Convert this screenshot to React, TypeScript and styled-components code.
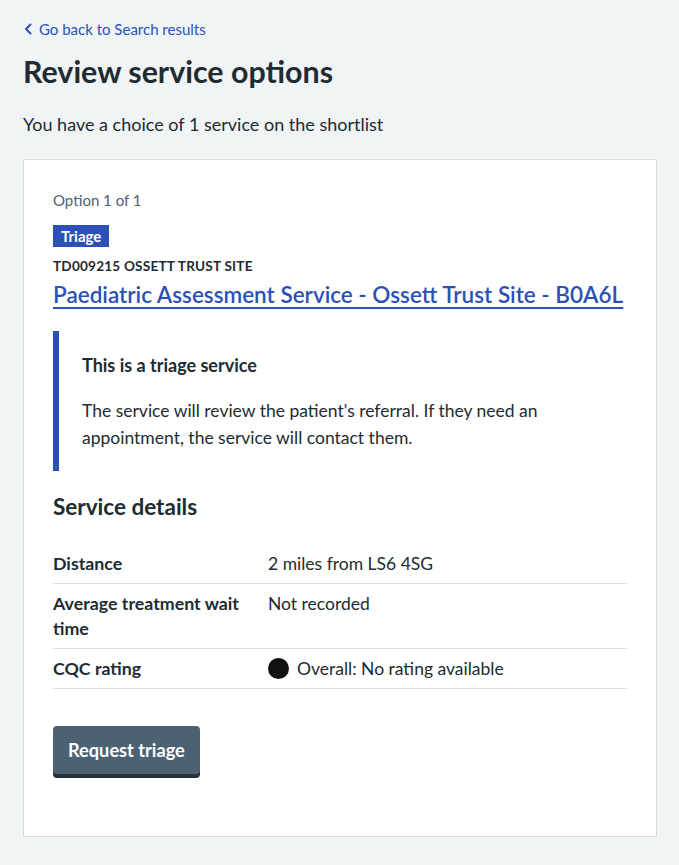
import React from "react";
import styled, { createGlobalStyle } from "styled-components";

const Global = createGlobalStyle`
  html, body { margin: 0; padding: 0; background: #f0f4f5; }
  body { font-family: Lato, "Noto Sans", sans-serif; color: #212b32; -webkit-font-smoothing: antialiased; }
  * { box-sizing: border-box; }
`;

const Page = styled.main`
  padding: 18px 22px 28px 23px;
  display: flex;
  flex-direction: column;
`;

const BackLink = styled.a`
  display: inline-flex;
  align-items: center;
  gap: 7px;
  color: #2c50b6;
  font-size: 15px;
  line-height: 22px;
  text-decoration: none;
  align-self: flex-start;
  padding-left: 1px;
`;

const Title = styled.h1`
  margin: 13px 0 0;
  font-size: 30.4px;
  line-height: 36px;
  font-weight: 700;
`;

const Lead = styled.p`
  margin: 23px 0 0;
  font-size: 18px;
  line-height: 24px;
`;

const Card = styled.section`
  margin-top: 23px;
  background: #fff;
  border: 1px solid #d8dde0;
  padding: 29px 29px 62px;
  display: flex;
  flex-direction: column;
`;

const Caption = styled.div`
  color: #4c6272;
  font-size: 15px;
  line-height: 22px;
`;

const Tag = styled.span`
  display: inline-block;
  align-self: flex-start;
  margin-top: 14px;
  background: #2c50b6;
  color: #fff;
  font-weight: 700;
  font-size: 15px;
  line-height: 22px;
  height: 22px;
  padding: 0 8px;
`;

const Code = styled.div`
  margin-top: 10px;
  font-size: 13.6px;
  font-weight: 700;
  line-height: 18px;
  letter-spacing: 0.2px;
`;

const ServiceLink = styled.a`
  margin-top: 5px;
  align-self: flex-start;
  color: #2c50b6;
  font-size: 22.5px;
  line-height: 30px;
  font-weight: 600;
  text-decoration: underline;
  text-underline-offset: 4px;
  text-decoration-thickness: 2px;
`;

const Inset = styled.div`
  margin-top: 21px;
  border-left: 6px solid #2c50b6;
  padding: 22px 0 20px 23px;
`;

const InsetTitle = styled.h3`
  margin: 0;
  font-size: 18px;
  line-height: 24px;
  font-weight: 700;
`;

const InsetText = styled.p`
  margin: 20px 0 0;
  font-size: 17.5px;
  line-height: 27px;
`;

const SectionTitle = styled.h2`
  margin: 20px 0 0;
  font-size: 22.5px;
  line-height: 32px;
  font-weight: 700;
`;

const SummaryList = styled.dl`
  margin: 21px 0 0;
  width: 574px;
`;

const Row = styled.div`
  display: grid;
  grid-template-columns: 215px 1fr;
  border-bottom: 1px solid #d8dde0;
  padding: 7px 0;
`;

const Key = styled.dt`
  font-weight: 700;
  font-size: 17.8px;
  line-height: 25px;
  padding-right: 10px;
`;

const Value = styled.dd`
  margin: 0;
  font-size: 17.5px;
  line-height: 25px;
  display: flex;
  align-items: center;
  gap: 8px;
  align-self: start;
`;

const Dot = styled.span`
  width: 21px;
  height: 21px;
  border-radius: 50%;
  background: #111;
  flex: none;
`;

const Button = styled.button`
  margin-top: 37px;
  align-self: flex-start;
  background: #4c6272;
  color: #fff;
  border: none;
  border-radius: 4px;
  box-shadow: 0 4px 0 #263139;
  font-family: inherit;
  font-weight: 700;
  font-size: 18.2px;
  line-height: 24px;
  padding: 12px 15px;
  cursor: pointer;
`;

const Chevron = () => (
  <svg width="8" height="12" viewBox="0 0 8 12" aria-hidden="true">
    <path d="M6.5 1.5 L2 6 L6.5 10.5" fill="none" stroke="#2c50b6" strokeWidth="2" strokeLinecap="round" strokeLinejoin="round" />
  </svg>
);

export default function App() {
  return (
    <>
      <Global />
      <Page>
        <BackLink href="#">
          <Chevron />
          Go back to Search results
        </BackLink>
        <Title>Review service options</Title>
        <Lead>You have a choice of 1 service on the shortlist</Lead>
        <Card>
          <Caption>Option 1 of 1</Caption>
          <Tag>Triage</Tag>
          <Code>TD009215 OSSETT TRUST SITE</Code>
          <ServiceLink href="#">Paediatric Assessment Service - Ossett Trust Site - B0A6L</ServiceLink>
          <Inset>
            <InsetTitle>This is a triage service</InsetTitle>
            <InsetText>
              The service will review the patient's referral. If they need an appointment, the service will contact them.
            </InsetText>
          </Inset>
          <SectionTitle>Service details</SectionTitle>
          <SummaryList>
            <Row>
              <Key>Distance</Key>
              <Value>2 miles from LS6 4SG</Value>
            </Row>
            <Row>
              <Key>Average treatment wait time</Key>
              <Value>Not recorded</Value>
            </Row>
            <Row>
              <Key>CQC rating</Key>
              <Value>
                <Dot />
                Overall: No rating available
              </Value>
            </Row>
          </SummaryList>
          <Button>Request triage</Button>
        </Card>
      </Page>
    </>
  );
}
